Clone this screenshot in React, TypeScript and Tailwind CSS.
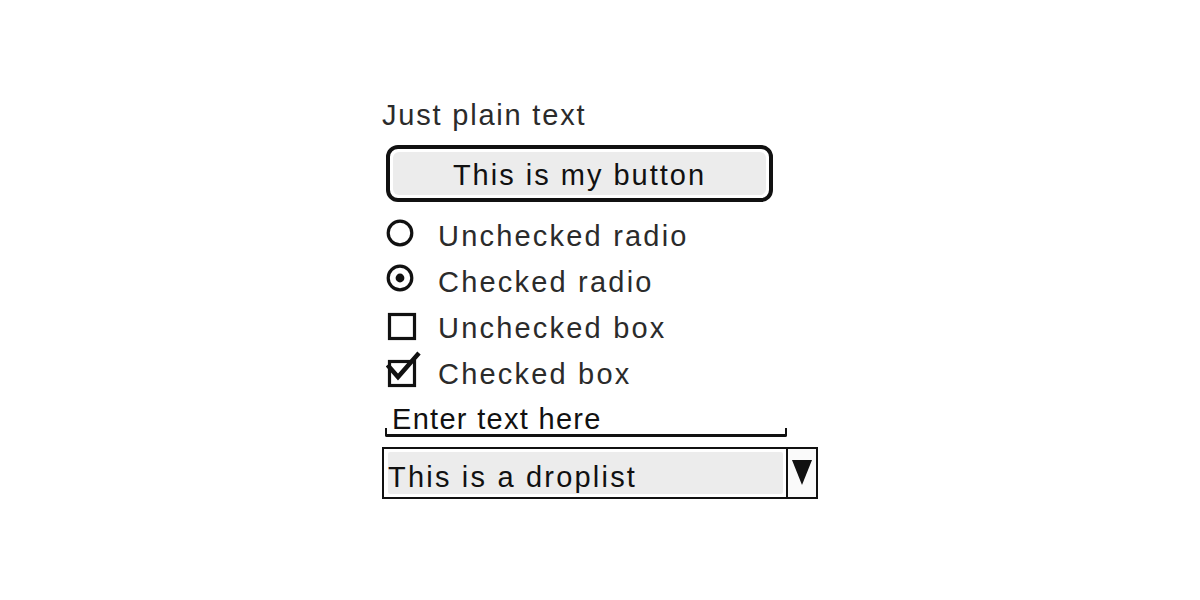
import React from "react";

const font = { fontFamily: '"Liberation Sans", Arial, sans-serif' };

function RadioIcon({ checked }: { checked?: boolean }) {
  return (
    <svg width="36" height="46" viewBox="0 0 36 46" className="shrink-0">
      <circle cx="14" cy={checked ? 20 : 21} r="11.8" fill="white" stroke="#111" strokeWidth="3.2" />
      {checked && <circle cx="14" cy="20" r="4.4" fill="#111" />}
    </svg>
  );
}

function BoxIcon({ checked }: { checked?: boolean }) {
  return (
    <svg width="36" height="46" viewBox="0 0 36 46" className="shrink-0">
      <rect
        x="3.5"
        y={checked ? 11.5 : 10.5}
        width="25"
        height="24"
        fill="white"
        stroke="#111"
        strokeWidth="3.2"
      />
      {checked && (
        <polyline
          points="1.5,15 12,27 33,3"
          fill="none"
          stroke="#111"
          strokeWidth="4.5"
          strokeLinejoin="miter"
        />
      )}
    </svg>
  );
}

function Row({ children, label }: { children: React.ReactNode; label: string }) {
  return (
    <div className="flex h-[46px] items-start">
      <div className="ml-[4px]">{children}</div>
      <div className="ml-[16px] h-[46px] pt-[2px] text-[29px] leading-[44px] tracking-[2.2px] text-[#2b2b2b]">
        {label}
      </div>
    </div>
  );
}

export default function App() {
  return (
    <div className="min-h-[600px] w-full bg-white" style={font}>
      <div className="mx-auto flex w-[436px] flex-col pt-[94px]">
        <div className="h-[40px] pt-[2px] text-[29px] leading-[38px] tracking-[1.8px] text-[#2b2b2b]">
          Just plain text
        </div>

        <div className="ml-[4px] mt-[11px] h-[57px] w-[387px] rounded-[12px] border-[4px] border-[#111] bg-white p-[3px]">
          <div className="flex h-full w-full items-center justify-center rounded-[6px] bg-[#ececec] pt-[4px] text-[29px] leading-[39px] tracking-[2px] text-[#111]">
            This is my button
          </div>
        </div>

        <div className="mt-[10px] flex flex-col">
          <Row label="Unchecked radio">
            <RadioIcon />
          </Row>
          <Row label="Checked radio">
            <RadioIcon checked />
          </Row>
          <Row label="Unchecked box">
            <BoxIcon />
          </Row>
          <Row label="Checked box">
            <BoxIcon checked />
          </Row>
        </div>

        <div className="ml-[3px] flex w-[402px] flex-col">
          <div className="h-[41px] pl-[7px] pt-[5px] text-[29px] leading-[36px] tracking-[1.3px] text-[#111]">
            Enter text here
          </div>
          <div className="-mt-[9px] h-[9px] w-full rounded-b-[2px] border-x-[2px] border-b-[3px] border-[#111]" />
        </div>

        <div className="mt-[10px] flex h-[52px] w-[436px] border-[2px] border-[#111] bg-white">
          <div className="flex-1 py-[3px] pl-[4px] pr-[3px]">
            <div className="h-full w-full rounded-[2px] bg-[#ececec] pt-[8px] text-[29px] leading-[34px] tracking-[2.2px] text-[#111]">
              This is a droplist
            </div>
          </div>
          <div className="flex w-[30px] items-center justify-center border-l-[2px] border-[#111] bg-[#fafafa]">
            <svg width="20" height="26" viewBox="0 0 20 26">
              <polygon points="0,0 20,0 10,25" fill="#111" />
            </svg>
          </div>
        </div>
      </div>
    </div>
  );
}
